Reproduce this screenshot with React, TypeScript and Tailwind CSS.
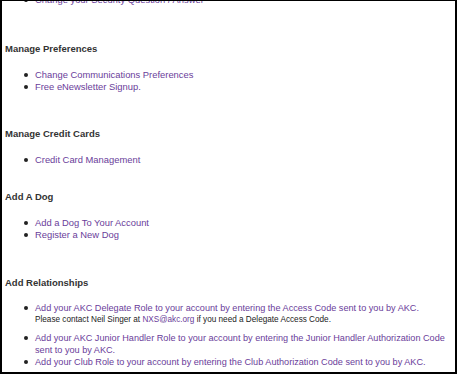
import React from "react";

const Bullet = () => (
  <span className="absolute left-[-11px] top-[4px] w-[4px] h-[4px] rounded-full bg-[#222]" />
);

const Item = ({ children, className = "" }: { children: React.ReactNode; className?: string }) => (
  <li className={`relative ${className}`}>
    <Bullet />
    {children}
  </li>
);

const link = "text-[#6a3d9a]";

export default function App() {
  return (
    <div className="w-[458px] h-[375px] bg-white overflow-hidden">
      <div
        className="w-[457px] h-[374px] border-l-2 border-t border-r-2 border-b-2 border-black overflow-hidden text-[9.4px] leading-[12px] text-[#333]"
        style={{ fontFamily: '"Liberation Sans", Arial, sans-serif' }}
      >
        <ul className="pl-[33px] mt-[-7px]">
          <Item>
            <span className={link}>Change your Security Question / Answer</span>
          </Item>
        </ul>

        <div className="pl-[3px] mt-[37px] font-bold text-[9.5px]">Manage Preferences</div>
        <ul className="pl-[33px] mt-[14px]">
          <Item><span className={link}>Change Communications Preferences</span></Item>
          <Item><span className={link}>Free eNewsletter Signup.</span></Item>
        </ul>

        <div className="pl-[3px] mt-[35px] font-bold text-[9.5px]">Manage Credit Cards</div>
        <ul className="pl-[33px] mt-[14px]">
          <Item><span className={link}>Credit Card Management</span></Item>
        </ul>

        <div className="pl-[3px] mt-[25px] font-bold text-[9.5px]">Add A Dog</div>
        <ul className="pl-[33px] mt-[14px]">
          <Item><span className={link}>Add a Dog To Your Account</span></Item>
          <Item><span className={link}>Register a New Dog</span></Item>
        </ul>

        <div className="pl-[3px] mt-[36px] font-bold text-[9.5px]">Add Relationships</div>
        <ul className="pl-[33px] mt-[13px] pr-[4px] text-[9.15px]">
          <Item>
            <span className={link}>Add your AKC Delegate Role to your account by entering the Access Code sent to you by AKC.</span>
            <div className="text-[8.2px] leading-[10px] mt-[1px] text-[#222]">
              Please contact Neil Singer at <span className={link}>NXS@akc.org</span> if you need a Delegate Access Code.
            </div>
          </Item>
          <Item className="mt-[7px]">
            <span className={link}>Add your AKC Junior Handler Role to your account by entering the Junior Handler Authorization Code sent to you by AKC.</span>
          </Item>
          <Item>
            <span className={link}>Add your Club Role to your account by entering the Club Authorization Code sent to you by AKC.</span>
          </Item>
        </ul>
      </div>
    </div>
  );
}
